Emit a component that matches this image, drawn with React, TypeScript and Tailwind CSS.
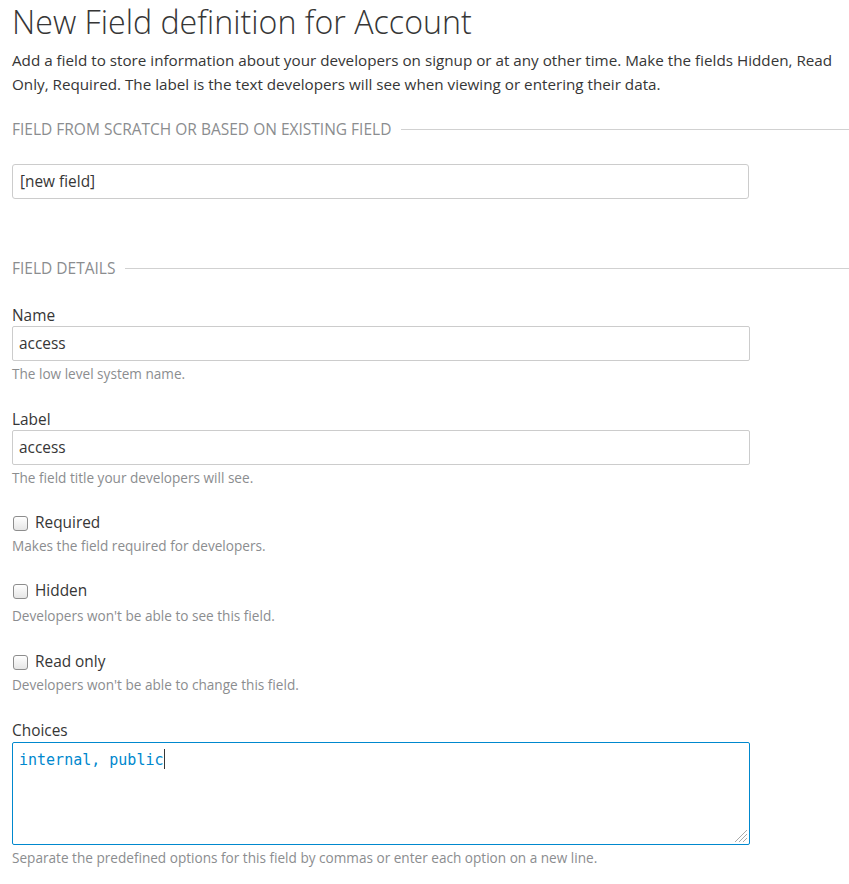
import React from "react";

function Legend({ children }: { children: React.ReactNode }) {
  return (
    <div className="flex items-center gap-[10px]">
      <span className="shrink-0 text-[15.5px] uppercase leading-[20px] text-[#8b8d8f]">
        {children}
      </span>
      <span className="h-px flex-1 bg-[#d1d1d1]" />
    </div>
  );
}

function TextField({ label, value, help }: { label: string; value: string; help: string }) {
  return (
    <div className="flex flex-col">
      <label className="pt-[1px] text-[15.4px] leading-[21px] text-[#363636]">{label}</label>
      <div className="flex h-[35px] w-[738px] items-center rounded-[2px] border border-[#cccccc] px-[6px] text-[15.4px] text-[#363636]">
        {value}
      </div>
      <p className="mt-[3px] text-[13.6px] leading-[20px] text-[#8b8d8f]">{help}</p>
    </div>
  );
}

function CheckField({ label, help, wide }: { label: string; help: string; wide?: boolean }) {
  return (
    <div className="flex flex-col">
      <div className="flex items-center gap-[7px] leading-[22px]">
        <span className="ml-[1px] h-[15px] w-[15px] rounded-[3px] border border-[#8d8d8d] bg-gradient-to-b from-[#ffffff] to-[#e6e6e6]" />
        <span className="text-[15.4px] text-[#363636]">{label}</span>
      </div>
      <p className={(wide ? "mt-[4px] " : "mt-[2px] ") + "text-[13.6px] leading-[20px] text-[#8b8d8f]"}>
        {help}
      </p>
    </div>
  );
}

export default function App() {
  return (
    <div className="min-h-[884px] bg-white pl-[12px] font-['Open_Sans',sans-serif]">
      <h1 className="pt-[1px] text-[32.2px] leading-[42px] font-light text-[#363636]">
        New Field definition for Account
      </h1>
      <p className="mt-[5px] pr-[6px] text-[15.22px] leading-[24px] text-[#363636]">
        Add a field to store information about your developers on signup or at any other time. Make the
        fields Hidden, Read Only, Required. The label is the text developers will see when viewing or
        entering their data.
      </p>

      <div className="mt-[23px]">
        <Legend>Field from scratch or based on existing field</Legend>
      </div>
      <div className="mt-[25px] flex h-[35px] w-[737px] items-center rounded-[3px] border border-[#cccccc] px-[7px] text-[15.4px] text-[#363636]">
        [new field]
      </div>

      <div className="mt-[59px]">
        <Legend>Field details</Legend>
      </div>

      <div className="mt-[26px] flex flex-col gap-[24px]">
        <TextField label="Name" value="access" help="The low level system name." />
        <TextField label="Label" value="access" help="The field title your developers will see." />
        <div className="flex flex-col gap-[24px]">
          <CheckField label="Required" help="Makes the field required for developers." />
          <CheckField label="Hidden" help="Developers won't be able to see this field." wide />
          <div className="pt-[1px]">
            <CheckField label="Read only" help="Developers won't be able to change this field." />
          </div>
        </div>
        <div className="flex flex-col pt-[1px]">
          <label className="text-[15.4px] leading-[22px] text-[#363636]">Choices</label>
          <div className="relative h-[103px] w-[738px] rounded-[2px] border border-[#0088ce] px-[6px] pt-[2px]">
            <span className="font-['DejaVu_Sans_Mono',monospace] text-[15px] leading-[22px] text-[#0088ce]">
              internal, public
            </span>
            <span className="inline-block h-[20px] w-px translate-y-[4px] bg-[#363636]" />
            <svg
              className="absolute right-[1px] bottom-[1px]"
              width="14"
              height="14"
              viewBox="0 0 14 14"
            >
              <line x1="1" y1="13" x2="13" y2="1" stroke="#a9a9a9" strokeWidth="1" />
              <line x1="5" y1="13" x2="13" y2="5" stroke="#a9a9a9" strokeWidth="1" />
              <line x1="9" y1="13" x2="13" y2="9" stroke="#a9a9a9" strokeWidth="1" />
            </svg>
          </div>
          <p className="mt-[3px] text-[13.6px] leading-[20px] text-[#8b8d8f]">
            Separate the predefined options for this field by commas or enter each option on a new line.
          </p>
        </div>
      </div>
    </div>
  );
}
